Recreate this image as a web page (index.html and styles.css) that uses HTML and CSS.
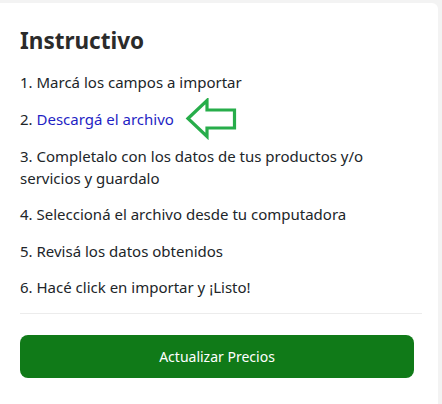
FILE: index.html
```html
<!DOCTYPE html>
<html lang="es">
<head>
<meta charset="utf-8">
<link rel="stylesheet" href="styles.css">
</head>
<body>
<div class="card">
  <h2 class="title">Instructivo</h2>
  <div class="steps">
    <p class="step">1. Marcá los campos a importar</p>
    <p class="step">2. <a class="link" href="#">Descargá el archivo</a><svg class="arrow" width="53" height="42" viewBox="0 0 53 42"><path d="M3 20.5 L22 2.5 L22 12 L49.5 12 L49.5 30 L22 30 L22 38.5 Z" fill="none" stroke="#27ad4a" stroke-width="3.2" stroke-linejoin="miter"/></svg></p>
    <p class="step">3. Completalo con los datos de tus productos y/o servicios y guardalo</p>
    <p class="step">4. Seleccioná el archivo desde tu computadora</p>
    <p class="step">5. Revisá los datos obtenidos</p>
    <p class="step">6. Hacé click en importar y ¡Listo!</p>
  </div>
  <hr class="sep">
  <button class="btn">Actualizar Precios</button>
</div>
</body>
</html>
```

FILE: styles.css
```css
html, body {
  margin: 0;
  padding: 0;
  background: #f3f3f3;
}
body {
  font-family: "Noto Sans", "Open Sans", sans-serif;
  color: #212529;
}
.card {
  margin-top: 3px;
  width: 438px;
  height: 401px;
  box-sizing: border-box;
  background: #fff;
  border-radius: 0 6px 0 0;
  padding: 24px 16px 0 20px;
}
.title {
  margin: 0;
  font-size: 22.5px;
  line-height: 28px;
  font-weight: 700;
  color: #2b2b2b;
}
.steps {
  margin-top: 16px;
  display: flex;
  flex-direction: column;
  gap: 14.5px;
}
.step {
  margin: 0;
  font-size: 15px;
  line-height: 22px;
}
.link {
  color: #1f1fc4;
  text-decoration: none;
}
.arrow {
  vertical-align: middle;
  margin: -12px 0 -10px 11px;
}
.sep {
  margin: 15px 0 21px;
  border: 0;
  border-top: 1px solid #ececec;
}
.btn {
  display: block;
  width: calc(100% - 8px);
  height: 43px;
  border: 0;
  border-radius: 8px;
  background: #107a18;
  color: #fff;
  font-family: inherit;
  font-size: 14px;
}
```
